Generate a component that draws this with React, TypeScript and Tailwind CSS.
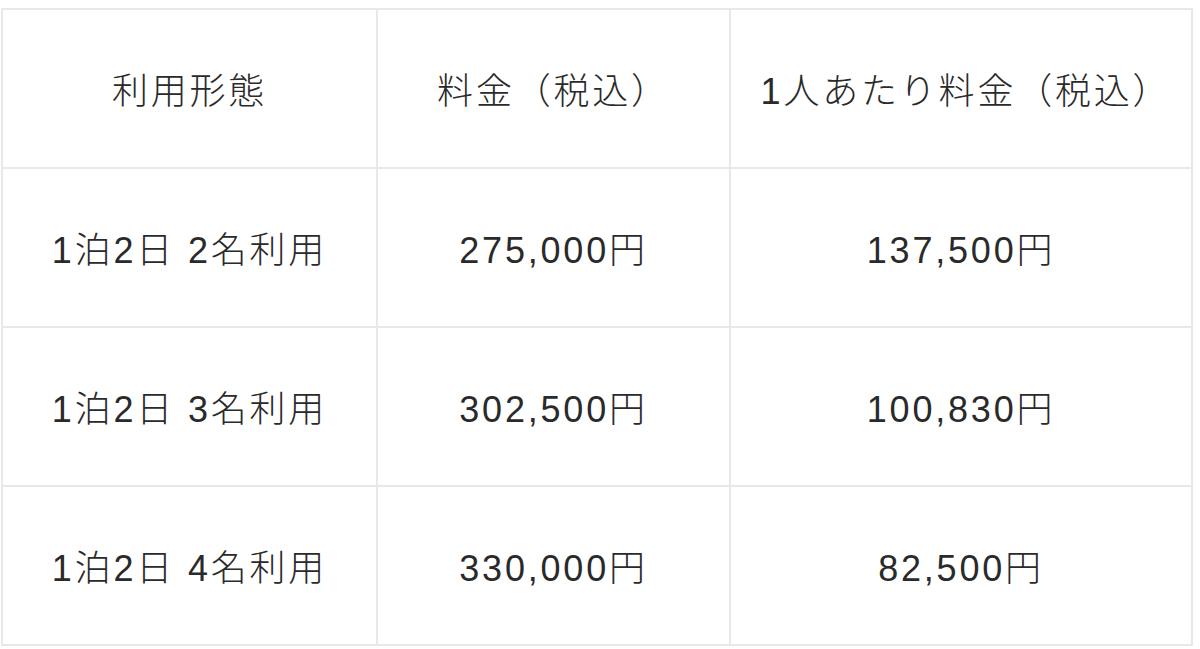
import React from "react";

const rows = [
  ["1泊2日 2名利用", "275,000円", "137,500円"],
  ["1泊2日 3名利用", "302,500円", "100,830円"],
  ["1泊2日 4名利用", "330,000円", "82,500円"],
];

export default function App() {
  const cell = "border-2 border-[#e8e8ec] text-center align-middle pt-[6px]";
  return (
    <div
      className="w-[1200px] h-[649px] bg-white text-[#2a2a2a] text-[36px] font-light tracking-[2.8px] pl-[1px] pt-[8px]"
      style={{ fontFamily: '"Liberation Sans", "Noto Sans CJK JP", sans-serif' }}
    >
      <table className="border-collapse w-[1190px] h-[637px] table-fixed">
        <colgroup>
          <col className="w-[375px]" />
          <col className="w-[353px]" />
          <col className="w-[462px]" />
        </colgroup>
        <tbody>
          <tr className="h-[159px]">
            <td className={cell}>利用形態</td>
            <td className={cell}>料金（税込）</td>
            <td className={cell}>
              <span className="pl-[10px]">1人あたり料金（税込）</span>
            </td>
          </tr>
          {rows.map((r) => (
            <tr key={r[0]} className="h-[159px]">
              {r.map((c, i) => (
                <td key={i} className={cell}>
                  {c}
                </td>
              ))}
            </tr>
          ))}
        </tbody>
      </table>
    </div>
  );
}
